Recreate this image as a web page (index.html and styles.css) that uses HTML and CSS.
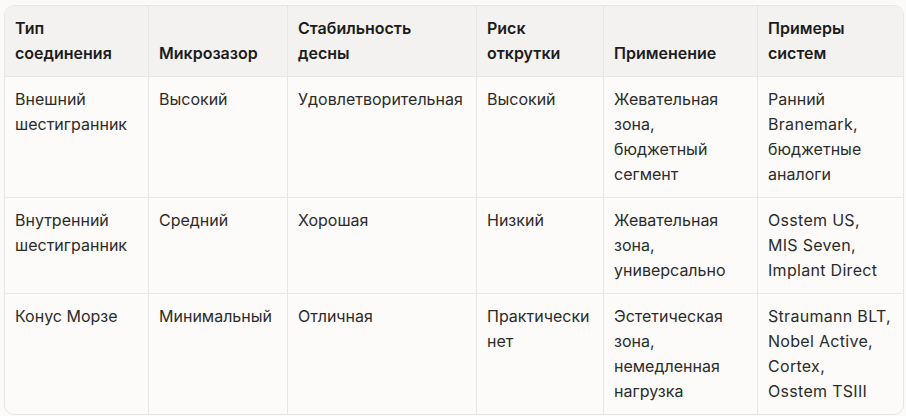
FILE: index.html
```html
<!DOCTYPE html>
<html lang="ru">
<head>
<meta charset="utf-8">
<link rel="stylesheet" href="styles.css">
</head>
<body>
<div class="wrap">
<table class="grid">
<colgroup>
<col class="c1"><col class="c2"><col class="c3"><col class="c4"><col class="c5"><col class="c6">
</colgroup>
<thead>
<tr>
<th>Тип соединения</th>
<th>Микрозазор</th>
<th>Стабильность десны</th>
<th>Риск открутки</th>
<th>Применение</th>
<th>Примеры систем</th>
</tr>
</thead>
<tbody>
<tr>
<td>Внешний шестигранник</td>
<td>Высокий</td>
<td>Удовлетворительная</td>
<td>Высокий</td>
<td>Жевательная зона, бюджетный сегмент</td>
<td>Ранний<br><span class="lat">Branemark,</span><br>бюджетные аналоги</td>
</tr>
<tr>
<td>Внутренний шестигранник</td>
<td>Средний</td>
<td>Хорошая</td>
<td>Низкий</td>
<td>Жевательная зона, универсально</td>
<td><span class="lat">Osstem US,</span><br><span class="lat">MIS Seven,</span><br><span class="lat">Implant Direct</span></td>
</tr>
<tr>
<td>Конус Морзе</td>
<td>Минимальный</td>
<td>Отличная</td>
<td>Практически нет</td>
<td>Эстетическая зона, немедленная нагрузка</td>
<td><span class="lat">Straumann BLT,</span><br><span class="lat">Nobel Active,</span><br><span class="lat">Cortex,</span><br><span class="lat">Osstem TSIII</span></td>
</tr>
</tbody>
</table>
</div>
</body>
</html>
```
FILE: styles.css
```css
html, body {
  margin: 0;
  padding: 0;
  background: #fbfaf8;
}
body {
  padding: 5px 2px 0 4px;
  font-family: Inter, "Noto Sans", sans-serif;
  font-size: 16px;
  line-height: 25px;
  color: #2b2b2b;
}
.wrap {
  width: 900px;
  box-sizing: border-box;
  border: 1px solid #e8e6e3;
  border-radius: 10px;
  overflow: hidden;
  background: #fcfbf9;
}
.grid {
  width: 898px;
  border-collapse: separate;
  border-spacing: 0;
  table-layout: fixed;
}
.c1 { width: 144px; }
.c2 { width: 139px; }
.c3 { width: 189px; }
.c4 { width: 127px; }
.c5 { width: 154px; }
.c6 { width: 145px; }
th, td {
  padding: 10px 10px;
  text-align: left;
  border-right: 1px solid #e8e6e3;
  border-bottom: 1px solid #e8e6e3;
}
th:last-child, td:last-child { border-right: none; }
tbody tr:last-child td { border-bottom: none; }
th {
  background: #f3f2f0;
  font-weight: 600;
  vertical-align: bottom;
  color: #1c1c1c;
}
td {
  vertical-align: top;
  font-weight: 400;
}
.lat {
  letter-spacing: 0.3px;
}
```
